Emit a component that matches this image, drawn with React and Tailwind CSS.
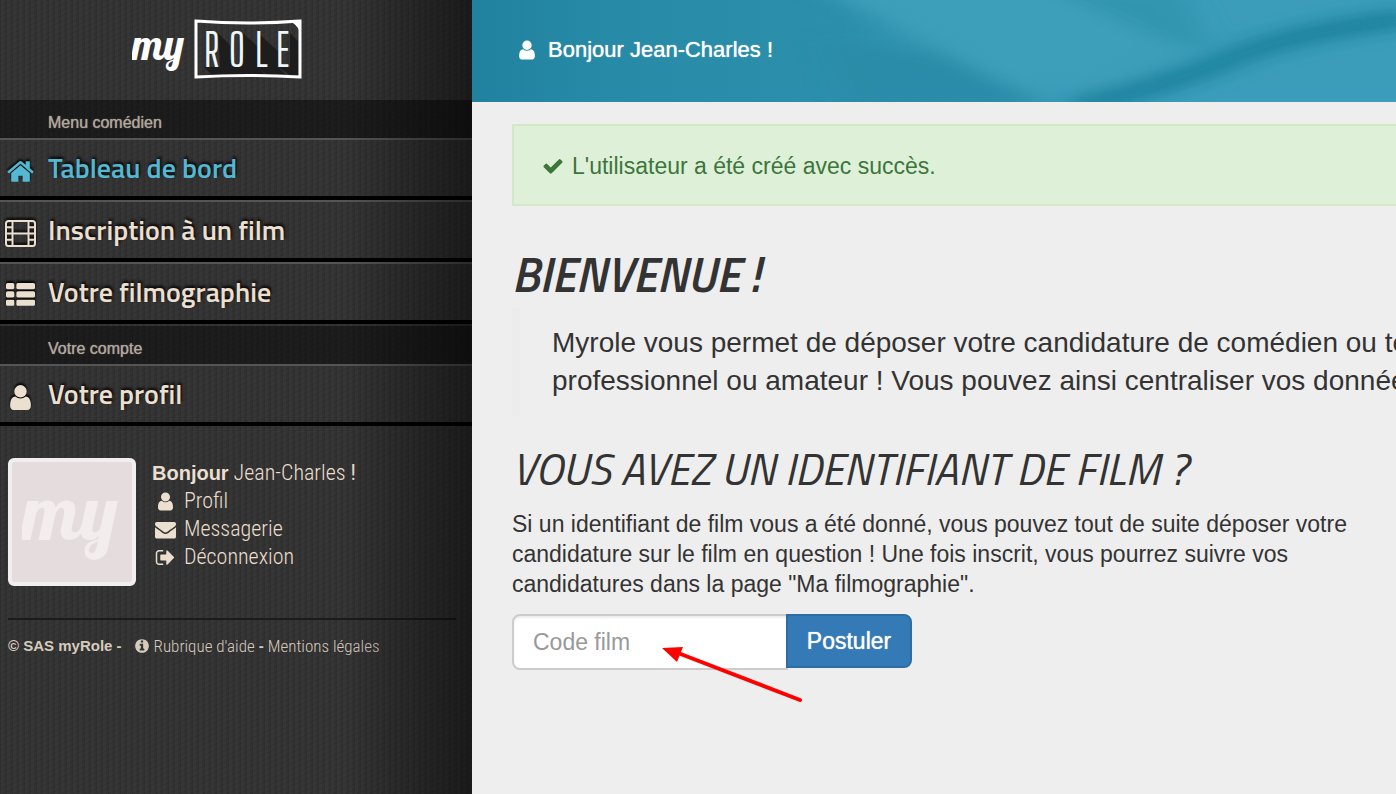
import React from "react";

const menu = [
  { icon: "home", label: "Tableau de bord", active: true },
  { icon: "film", label: "Inscription à un film" },
  { icon: "list", label: "Votre filmographie" },
];

const account = [{ icon: "user", label: "Votre profil" }];

const userLinks = [
  { icon: "user", label: "Profil" },
  { icon: "envelope", label: "Messagerie" },
  { icon: "signOut", label: "Déconnexion" },
];

const icons = {
  home: "M1472 992v480q0 26-19 45t-45 19h-384v-384h-256v384h-384q-26 0-45-19t-19-45v-480q0-1 .5-3t.5-3l575-474 575 474q1 2 1 6zm223-69l-62 74q-8 9-21 11h-3q-13 0-21-7l-692-577-692 577q-12 8-24 7-13-2-21-11l-62-74q-8-10-7-23.500t11-21.500l719-599q32-26 76-26t76 26l244 204v-195q0-14 9-23t23-9h192q14 0 23 9t9 23v408l219 182q10 8 11 21.500t-7 23.500z",
  list: "M512 1248v192q0 40-28 68t-68 28h-320q-40 0-68-28t-28-68v-192q0-40 28-68t68-28h320q40 0 68 28t28 68zm0-512v192q0 40-28 68t-68 28h-320q-40 0-68-28t-28-68v-192q0-40 28-68t68-28h320q40 0 68 28t28 68zm1280 512v192q0 40-28 68t-68 28h-960q-40 0-68-28t-28-68v-192q0-40 28-68t68-28h960q40 0 68 28t28 68zm-1280-1024v192q0 40-28 68t-68 28h-320q-40 0-68-28t-28-68v-192q0-40 28-68t68-28h320q40 0 68 28t28 68zm1280 512v192q0 40-28 68t-68 28h-960q-40 0-68-28t-28-68v-192q0-40 28-68t68-28h960q40 0 68 28t28 68zm0-512v192q0 40-28 68t-68 28h-960q-40 0-68-28t-28-68v-192q0-40 28-68t68-28h960q40 0 68 28t28 68z",
  user: "M1536 1399q0 109-62.500 187t-150.500 78h-854q-88 0-150.500-78t-62.500-187q0-85 8.500-160.500t31.500-152 58.500-131 94-89 134.500-34.500q131 128 313 128t313-128q76 0 134.500 34.500t94 89 58.500 131 31.500 152 8.500 160.500zm-256-887q0 159-112.500 271.500t-271.500 112.500-271.500-112.500-112.500-271.500 112.500-271.500 271.500-112.500 271.500 112.500 112.500 271.500z",
  envelope: "M1792 710v794q0 66-47 113t-113 47h-1472q-66 0-113-47t-47-113v-794q44 49 101 87 362 246 497 345 57 42 92.500 65.500t94.500 48 110 24.500h2q51 0 110-24.500t94.500-48 92.500-65.500q170-123 498-345 57-39 100-87zm0-294q0 79-49 151t-122 123q-376 261-468 325-10 7-42.500 31t-54 38.500-52 32.500-57.500 27-50 9h-2q-23 0-50-9t-57.500-27-52-32.500-54-38.500-42.500-31q-91-64-262-182.500t-205-142.500q-62-42-117-115.500t-55-136.500q0-78 41.500-130t118.500-52h1472q65 0 112.500 47t47.500 113z",
  signOut: "M704 1440q0 4 1 20t.5 26.500-3 23.500-10 19.500-20.500 6.500h-320q-119 0-203.500-84.500t-84.500-203.500v-704q0-119 84.500-203.500t203.500-84.500h320q13 0 22.500 9.500t9.500 22.500q0 4 1 20t.5 26.500-3 23.500-10 19.500-20.500 6.500h-320q-66 0-113 47t-47 113v704q0 66 47 113t113 47h312l11.500 1 11.500 3 8 5.500 7 9 2 13.500zm928-544q0 26-19 45l-544 544q-19 19-45 19t-45-19-19-45v-288h-448q-26 0-45-19t-19-45v-384q0-26 19-45t45-19h448v-288q0-26 19-45t45-19 45 19l544 544q19 19 19 45z",
  info: "M1152 1376v-160q0-14-9-23t-23-9h-96v-512q0-14-9-23t-23-9h-320q-14 0-23 9t-9 23v160q0 14 9 23t23 9h96v320h-96q-14 0-23 9t-9 23v160q0 14 9 23t23 9h448q14 0 23-9t9-23zm-128-896v-160q0-14-9-23t-23-9h-192q-14 0-23 9t-9 23v160q0 14 9 23t23 9h192q14 0 23-9t9-23zm640 416q0 209-103 385.500t-279.500 279.500-385.500 103-385.500-103-279.500-279.500-103-385.500 103-385.500 279.500-279.500 385.500-103 385.500 103 279.500 279.500 103 385.500z",
  check: "M1671 566q0 40-28 68l-724 724-136 136q-28 28-68 28t-68-28l-136-136-362-362q-28-28-28-68t28-68l136-136q28-28 68-28t68 28l294 295 656-657q28-28 68-28t68 28l136 136q28 28 28 68z",
};

function FilmIcon() {
  return (
    <svg viewBox="0 0 31 27" className="h-[27px] w-[31px]" fill="none" stroke="currentColor" strokeWidth="2" aria-hidden="true">
      <rect x="1" y="1" width="29" height="25" rx="2.500" />
      <path d="M7.500 1v25M23.500 1v25M7.500 13.500h16M1 7.200h6.500M1 13.500h6.500M1 19.800h6.500M23.500 7.200H30M23.500 13.500H30M23.500 19.800H30" />
    </svg>
  );
}

function Icon({ name, className }) {
  if (name === "film") return <FilmIcon />;
  return (
    <svg viewBox="0 0 1792 1792" className={className} fill="currentColor" aria-hidden="true">
      <path d={icons[name]} />
    </svg>
  );
}

function Logo() {
  return (
    <svg viewBox="0 0 170 62" className="h-[62px] w-[170px]" role="img" aria-label="myRole">
      {/* long shadows behind the letters */}
      <path d="M86 15l12 12v14l16 15-34 1-8-8h16zM111 15l14 13v21l8 7h-28l-8-8 14-4zM126 15l20 18v16l8 8h-18l-12-8zM158 15l8 8v34h-8l-12-8h12z" fill="#1d1d1d" />
      <path d="M64 3Q116 7 168 3V59Q116 56 64 59Z" fill="none" stroke="#fff" strokeWidth="3" />
      <path d="M157 3l11-1v12q-3-8-11-11z" fill="#fff" />
      <text x="0" y="42" fontSize="43" fill="#fff" className="font-['Lobster','Lato',sans-serif]">my</text>
      <text y="49" fontSize="44" fill="#eef6f8" className="font-['Big_Shoulders_Display','Roboto_Condensed',sans-serif] font-normal">
        <tspan x="72">R</tspan>
        <tspan x="97">O</tspan>
        <tspan x="123">L</tspan>
        <tspan x="144">E</tspan>
      </text>
    </svg>
  );
}

function MenuTitle({ children }) {
  return (
    <h2 className="h-[38px] bg-black/45 pt-[11px] pl-12 text-base leading-6 text-[#b0a79c] [text-shadow:0_0_1px_#b0a79c]">{children}</h2>
  );
}

function MenuItem({ icon, label, active }) {
  return (
    <li className="border-t-2 border-b-4 border-t-[#555] border-b-black">
      <a
        href="#"
        className={`flex h-14 items-center text-[28px] leading-[56px] font-semibold [text-shadow:1px_-2px_3px_#000] ${active ? "text-[#54b8d3]" : "text-[#ebdfcf]"}`}
      >
        <span className="flex w-12 items-center justify-start pt-1.5 pl-1">
          <span className="flex w-8 justify-center drop-shadow-[0_-2px_1px_#000]">
            <Icon name={icon} className="size-[29px]" />
          </span>
        </span>
        <span className="font-['Titillium_Web','Roboto',sans-serif]">{label}</span>
      </a>
    </li>
  );
}

function Sidebar() {
  return (
    <aside className="relative w-[472px] shrink-0 bg-[#363636] bg-[repeating-linear-gradient(90deg,rgba(0,0,0,0.12)_0_1px,transparent_1px_4px,rgba(0,0,0,0.08)_4px_6px),repeating-linear-gradient(155deg,rgba(0,0,0,0.08)_0_1px,transparent_1px_5px)] text-[#ebdfcf]">
      <a href="#" className="flex h-[100px] justify-center pt-[18px] pr-[38px]">
        <Logo />
      </a>
      <nav>
        <MenuTitle>Menu comédien</MenuTitle>
        <ul className="pb-0.5">
          {menu.map((item) => <MenuItem key={item.label} {...item} />)}
        </ul>
        <MenuTitle>Votre compte</MenuTitle>
        <ul>
          {account.map((item) => <MenuItem key={item.label} {...item} />)}
        </ul>
      </nav>

      <div className="px-2 pt-8">
        <div className="flex gap-4 pb-8">
          <div className="flex size-32 items-center justify-center rounded-md border-4 border-[#f0eeee] bg-[#e5dcde]">
            <svg viewBox="0 0 100 100" className="size-[100px]" role="img" aria-label="my">
              <text x="0" y="68" fontSize="79" fill="#f3edee" className="font-['Lobster','Lato',sans-serif]">my</text>
            </svg>
          </div>
          <div className="pt-px font-['Roboto_Condensed','Roboto',sans-serif] text-[22px] leading-7 font-light">
            <p>
              <strong className="font-['Liberation_Sans',Arial,sans-serif] text-xl leading-7 font-bold">Bonjour</strong> Jean-Charles <strong>!</strong>
            </p>
            <ul>
              {userLinks.map((link) => (
                <li key={link.label}>
                  <a href="#" className="flex items-center">
                    <span className="flex w-8 pl-[3px]">
                      <Icon name={link.icon} className="size-[21px]" />
                    </span>
                    {link.label}
                  </a>
                </li>
              ))}
            </ul>
          </div>
        </div>
        <footer className="mr-2 flex items-center border-t-2 border-[#1b1b1b] pt-3.5 text-[15px] leading-6 text-[#d6cbbd]">
          <strong>© SAS myRole -</strong>
          <Icon name="info" className="mr-1 ml-3 size-4" />
          <a href="#" className="font-['Roboto_Condensed','Roboto',sans-serif] text-[17px] leading-6 font-light">Rubrique d'aide</a>
          <strong className="mx-1">-</strong>
          <a href="#" className="font-['Roboto_Condensed','Roboto',sans-serif] text-[17px] leading-6 font-light">Mentions légales</a>
        </footer>
      </div>
      <div className="pointer-events-none absolute inset-y-0 right-0 w-32 bg-linear-to-r from-transparent to-black/50" />
    </aside>
  );
}

function HeaderBackdrop() {
  return (
    <svg viewBox="0 0 924 102" preserveAspectRatio="none" className="absolute inset-0 size-full" aria-hidden="true">
      <defs>
        <linearGradient id="sea" x1="0" x2="1">
          <stop offset="0" stopColor="#20829e" />
          <stop offset="0.15" stopColor="#278aa6" />
          <stop offset="0.4" stopColor="#2c8fab" />
          <stop offset="0.6" stopColor="#3b9db9" />
          <stop offset="1" stopColor="#3b9db9" />
        </linearGradient>
        <filter id="soft" x="-30%" y="-80%" width="160%" height="260%">
          <feGaussianBlur stdDeviation="14 7" />
        </filter>
      </defs>
      <rect width="924" height="102" fill="url(#sea)" />
      <g filter="url(#soft)">
        <path d="M330 -20L600 -20 720 40 640 84 540 92 460 44z" fill="#3d9fba" />
        <path d="M350 40L470 54 580 106 380 116z" fill="#2a8ca8" />
        <path d="M560 -20L710 -10 740 50 690 40z" fill="#3295b0" />
        <path d="M600 108Q700 84 760 58T940 18" stroke="#1f839f" strokeWidth="20" fill="none" />
      </g>
    </svg>
  );
}

export default function App() {
  return (
    <div className="flex min-h-screen bg-[#eee] font-['Liberation_Sans',Arial,sans-serif] text-[#333]">
      <Sidebar />
      <div className="min-w-0 flex-1 overflow-hidden">
        <header className="relative flex h-[102px] items-center bg-[#2789a4] pb-0.5 pl-11 text-white">
          <HeaderBackdrop />
          <p className="relative flex items-center text-[22px] leading-[30px] [text-shadow:0_0_1px_#fff]">
            <Icon name="user" className="mr-2.5 size-[22px]" />
            Bonjour Jean-Charles !
          </p>
        </header>

        <main className="pl-10">
          <div role="alert" className="mt-[22px] flex items-center border-2 border-r-0 border-[#d3e9c5] bg-[#dff0d8] pt-[25px] pb-[23px] pl-7 text-[23px] leading-[30px] text-[#3c763d]">
            <Icon name="check" className="mr-2 size-[22px]" />
            L'utilisateur a été créé avec succès.
          </div>

          <h1 className="mt-11 font-['Titillium_Web','Roboto',sans-serif] text-[48px] leading-[50px] font-semibold uppercase italic">Bienvenue !</h1>
          <blockquote className="mt-2 border-l-8 border-[#ececec] py-4 pl-8 text-[28px] leading-[38px] whitespace-nowrap">
            Myrole vous permet de déposer votre candidature de comédien ou technicien
            <br />
            professionnel ou amateur ! Vous pouvez ainsi centraliser vos données
          </blockquote>

          <h2 className="mt-7 font-['Titillium_Web','Roboto',sans-serif] text-[44px] leading-[50px] uppercase italic">
            Vous avez un identifiant de film ?
          </h2>
          <p className="mt-[15px] max-w-[840px] text-[23px] leading-[30px]">
            Si un identifiant de film vous a été donné, vous pouvez tout de suite déposer votre candidature sur le film en question ! Une fois inscrit, vous pourrez suivre vos candidatures dans la page "Ma filmographie".
          </p>

          <form className="relative mt-[15px] flex w-[400px] items-start text-[23px]" onSubmit={(e) => e.preventDefault()}>
            <input
              type="text"
              aria-label="Code film"
              placeholder="Code film"
              className="h-14 min-w-0 flex-1 rounded-l-lg border-2 border-[#ccc] bg-white px-[19px] shadow-[inset_0_2px_2px_rgba(0,0,0,0.075)] placeholder:text-[#999]"
            />
            <button type="submit" className="-ml-0.5 h-[54px] w-[126px] rounded-r-lg border-2 border-[#2e6da4] bg-[#337ab7] text-white [text-shadow:0_0_1px_#fff]">
              Postuler
            </button>
            <svg viewBox="0 0 144 58" className="pointer-events-none absolute top-8 left-[150px] h-[58px] w-36" aria-hidden="true">
              <path d="M16 7L138 54" stroke="#f00" strokeWidth="4" strokeLinecap="round" />
              <path d="M0 2L21 1 15 16z" fill="#f00" />
            </svg>
          </form>
        </main>
      </div>
    </div>
  );
}
